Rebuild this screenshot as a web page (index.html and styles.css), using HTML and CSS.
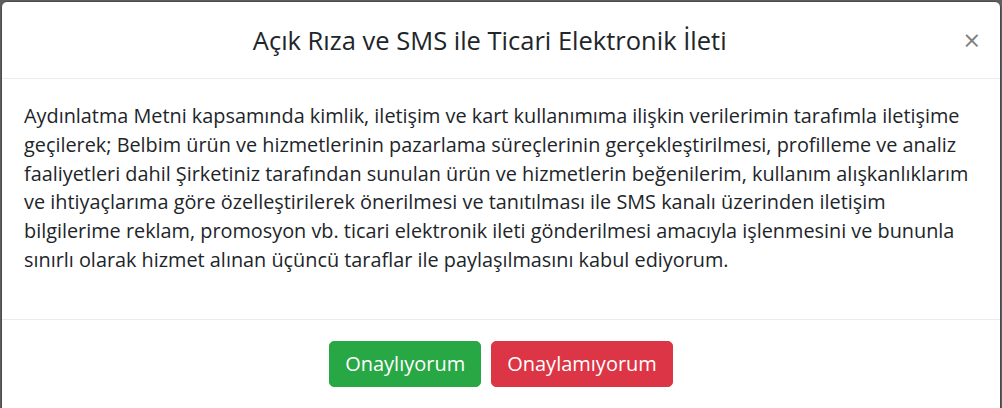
FILE: index.html
```html
<!DOCTYPE html>
<html lang="tr">
<head>
<meta charset="utf-8">
<title>Açık Rıza ve SMS ile Ticari Elektronik İleti</title>
<link rel="stylesheet" href="styles.css">
</head>
<body>
<div class="modal">
  <div class="modal-header">
    <h5 class="modal-title">Açık Rıza ve SMS ile Ticari Elektronik İleti</h5>
    <button class="close" type="button" aria-label="Kapat">×</button>
  </div>
  <div class="modal-body">
    <p>Aydınlatma Metni kapsamında kimlik, iletişim ve kart kullanımıma ilişkin verilerimin tarafımla iletişime geçilerek; Belbim ürün ve hizmetlerinin pazarlama süreçlerinin gerçekleştirilmesi, profilleme ve analiz faaliyetleri dahil Şirketiniz tarafından sunulan ürün ve hizmetlerin beğenilerim, kullanım alışkanlıklarım ve ihtiyaçlarıma göre özelleştirilerek önerilmesi ve tanıtılması ile SMS kanalı üzerinden iletişim bilgilerime reklam, promosyon vb. ticari elektronik ileti gönderilmesi amacıyla işlenmesini ve bununla sınırlı olarak hizmet alınan üçüncü taraflar ile paylaşılmasını kabul ediyorum.</p>
  </div>
  <div class="modal-footer">
    <button class="btn btn-success" type="button">Onaylıyorum</button>
    <button class="btn btn-danger" type="button">Onaylamıyorum</button>
  </div>
</div>
</body>
</html>
```
FILE: styles.css
```css
html, body {
  margin: 0;
  padding: 0;
}
body {
  background: #5e5e5e;
  font-family: "Open Sans", "Noto Sans", sans-serif;
  color: #212529;
  overflow: hidden;
  height: 408px;
}
.modal {
  margin: 1px 1px 0 1px;
  background: #fff;
  border: 1px solid #4a4a4a;
  border-radius: 6px;
  height: 440px;
  box-sizing: border-box;
}
.modal-header {
  display: flex;
  align-items: flex-start;
  padding: 20px 20px 20px 34px;
  border-bottom: 1px solid #e9ecef;
}
.modal-title {
  flex: 1;
  margin: 0;
  text-align: center;
  font-size: 25.5px;
  font-weight: 400;
  line-height: 36px;
  color: #212529;
}
.close {
  background: none;
  border: 0;
  padding: 0 0 0 20px;
  margin: 0;
  font-family: "Open Sans", sans-serif;
  font-size: 29px;
  font-weight: 400;
  line-height: 36px;
  color: #000;
  opacity: 0.5;
  cursor: pointer;
}
.modal-body {
  padding: 23px 22px 20px;
}
.modal-body p {
  margin: 0 0 24px;
  font-size: 19.85px;
  line-height: 28.8px;
}
.modal-footer {
  display: flex;
  justify-content: center;
  gap: 10px;
  padding: 21px 22px;
  border-top: 1px solid #e9ecef;
}
.btn {
  font-family: inherit;
  font-size: 20px;
  line-height: 28px;
  padding: 8px 15px;
  border: 1px solid transparent;
  border-radius: 5px;
  color: #fff;
  cursor: pointer;
}
.btn-success {
  background: #28a745;
  border-color: #28a745;
}
.btn-danger {
  background: #dc3545;
  border-color: #dc3545;
}
```
